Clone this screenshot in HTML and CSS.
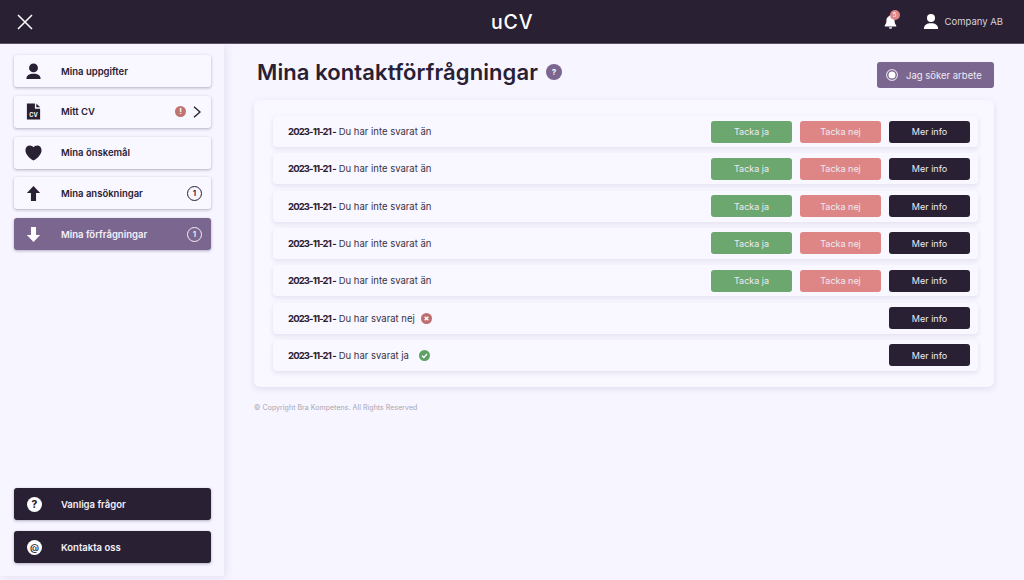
FILE: index.html
```html
<!DOCTYPE html>
<html lang="sv">

<head>
  <meta charset="UTF-8" />
  <title>Mina kontaktförfrågningar | uCV</title>
  <link rel="stylesheet" href="styles.css">
</head>

<body>

  <header class="topbar">
    <svg class="close-icon" viewBox="0 0 16 16" aria-hidden="true"><path d="M1 1l14 14M15 1L1 15" /></svg>
    <div class="logo">uCV</div>
    <div class="topbar-right">
      <div class="bell">
        <svg viewBox="0 0 16 18" aria-hidden="true"><path d="M8 1c.8 0 1.3.5 1.4 1.2C11.700 3 13 5 13 7.500c0 3 .6 4.600 2 6V15H1v-1.500c1.400-1.400 2-3 2-6C3 5 4.300 3 6.600 2.200 6.700 1.500 7.200 1 8 1zM6 16h4a2 2 0 0 1-4 0z" /></svg>
        <span class="bell-badge">5</span>
      </div>
      <div class="company">
        <svg viewBox="0 0 18 18" aria-hidden="true"><circle cx="9" cy="5" r="4.500" /><path d="M1 17.500c0-4.500 3-6.500 8-6.500s8 2 8 6.500z" /></svg>
        <span>Company AB</span>
      </div>
    </div>
  </header>

  <div class="page">
    <aside class="sidebar">
      <nav class="menu">
        <a class="menu-item">
          <svg class="menu-icon" viewBox="0 0 18 18"><circle cx="9" cy="5.200" r="4.700" /><path d="M1.500 17c0-3.800 2.800-5.500 7.500-5.500s7.500 1.700 7.500 5.500z" /></svg>
          <span class="menu-label">Mina uppgifter</span>
        </a>
        <a class="menu-item">
          <svg class="menu-icon" viewBox="0 0 18 18"><path d="M2 .5h8.500v5.500H16v11.500H2z" /><path d="M12 .5l4 4h-4z" /><text x="9" y="14.800" class="cv-text">CV</text></svg>
          <span class="menu-label">Mitt CV</span>
          <span class="alert-dot">!</span>
          <svg class="chevron" viewBox="0 0 8 12"><path d="M1 .8L7 6l-6 5.200" /></svg>
        </a>
        <a class="menu-item">
          <svg class="menu-icon heart" viewBox="0 0 18 18"><path d="M9 17.500C3.500 14 .5 10.500.5 6.500.5 3.200 2.500 1.500 5 1.500c1.800 0 3 .8 4 2 1-1.200 2.200-2 4-2 2.500 0 4.500 1.700 4.500 5 0 4-3 7.500-8.500 11z" /></svg>
          <span class="menu-label">Mina önskemål</span>
        </a>
        <a class="menu-item">
          <svg class="menu-icon" viewBox="0 0 18 18"><path d="M9 1l7 7.500h-4.300V17H6.300V8.500H2z" /></svg>
          <span class="menu-label">Mina ansökningar</span>
          <span class="count">1</span>
        </a>
        <a class="menu-item active">
          <svg class="menu-icon" viewBox="0 0 18 18"><path d="M9 17l-7-7.500h4.300V1h5.400v8.500H16z" /></svg>
          <span class="menu-label">Mina förfrågningar</span>
          <span class="count">1</span>
        </a>
      </nav>

      <nav class="menu menu-bottom">
        <a class="menu-item dark">
          <span class="round-icon">?</span>
          <span class="menu-label">Vanliga frågor</span>
        </a>
        <a class="menu-item dark">
          <span class="round-icon at">@</span>
          <span class="menu-label">Kontakta oss</span>
        </a>
      </nav>
    </aside>

    <main class="content">
      <div class="title-row">
        <h1>Mina kontaktförfrågningar</h1>
        <span class="help">?</span>
        <button class="job-toggle"><span class="radio"></span>Jag söker arbete</button>
      </div>

      <section class="card">
        <div class="row">
          <p><b>2023-11-21 -</b> Du har inte svarat än</p>
          <button class="btn yes">Tacka ja</button>
          <button class="btn no">Tacka nej</button>
          <button class="btn info">Mer info</button>
        </div>
        <div class="row">
          <p><b>2023-11-21 -</b> Du har inte svarat än</p>
          <button class="btn yes">Tacka ja</button>
          <button class="btn no">Tacka nej</button>
          <button class="btn info">Mer info</button>
        </div>
        <div class="row">
          <p><b>2023-11-21 -</b> Du har inte svarat än</p>
          <button class="btn yes">Tacka ja</button>
          <button class="btn no">Tacka nej</button>
          <button class="btn info">Mer info</button>
        </div>
        <div class="row">
          <p><b>2023-11-21 -</b> Du har inte svarat än</p>
          <button class="btn yes">Tacka ja</button>
          <button class="btn no">Tacka nej</button>
          <button class="btn info">Mer info</button>
        </div>
        <div class="row">
          <p><b>2023-11-21 -</b> Du har inte svarat än</p>
          <button class="btn yes">Tacka ja</button>
          <button class="btn no">Tacka nej</button>
          <button class="btn info">Mer info</button>
        </div>
        <div class="row">
          <p><b>2023-11-21 -</b> Du har svarat nej</p>
          <svg class="status" viewBox="0 0 12 12"><circle cx="6" cy="6" r="6" fill="#bd6f6f" /><path d="M4 4l4 4M8 4l-4 4" stroke="#fff" stroke-width="1.500" fill="none" /></svg>
          <button class="btn info">Mer info</button>
        </div>
        <div class="row">
          <p><b>2023-11-21 -</b> Du har svarat ja</p>
          <svg class="status status-ok" viewBox="0 0 12 12"><circle cx="6" cy="6" r="6" fill="#5da264" /><path d="M3.300 6.200l2 2 3.500-4" stroke="#fff" stroke-width="1.500" fill="none" /></svg>
          <button class="btn info">Mer info</button>
        </div>
      </section>

      <footer class="copyright">© Copyright Bra Kompetens. All Rights Reserved</footer>
    </main>
  </div>

</body>

</html>
```

FILE: styles.css
```css
* {
  margin: 0;
  padding: 0;
  box-sizing: border-box;
}

html,
body {
  height: 580px;
  overflow: hidden;
  font-family: Inter, 'Liberation Sans', sans-serif;
  background-color: #f7f5ff;
  color: #292033;
}

button {
  font-family: inherit;
  border: none;
}

/* topbar */
.topbar {
  height: 44px;
  padding: 0 21px 0 17px;
  display: flex;
  align-items: center;
  justify-content: space-between;
  position: relative;
  background-color: #292033;
  border-bottom: 1px solid #5d5468;
  color: #fff;
}

.close-icon {
  width: 16px;
  height: 16px;
  stroke: #fff;
  stroke-width: 1.500;
  fill: none;
}

.logo {
  position: absolute;
  left: 491px;
  top: 10px;
  font-size: 19.500px;
  line-height: 24px;
  font-weight: 500;
  letter-spacing: 0.8px;
}

.topbar-right {
  display: flex;
  align-items: center;
  gap: 25px;
}

.bell {
  width: 14px;
  height: 16px;
  position: relative;
}

.bell svg {
  display: block;
  width: 13px;
  height: 15px;
  fill: #fff;
}

.bell-badge {
  position: absolute;
  left: 6px;
  top: -4px;
  width: 10px;
  height: 10px;
  border-radius: 50%;
  background-color: #df8585;
  font-size: 6px;
  line-height: 10px;
  text-align: center;
}

.company {
  display: flex;
  align-items: center;
  gap: 6px;
  font-size: 9.500px;
  color: #d6d2dc;
}

.company svg {
  width: 16px;
  height: 17px;
  fill: #fff;
}

/* sidebar */
.page {
  display: flex;
  height: 536px;
}

.sidebar {
  width: 224px;
  height: 532px;
  padding: 11px 13px 13px 14px;
  display: flex;
  flex-direction: column;
  justify-content: space-between;
  box-shadow: 2px 2px 8px rgba(80, 60, 130, 0.1);
}

.menu {
  display: flex;
  flex-direction: column;
  gap: 8.800px;
}

.menu-bottom {
  gap: 11px;
}

.menu-item {
  height: 32px;
  padding: 0 9px 0 11px;
  display: flex;
  align-items: center;
  background-color: #f9f7ff;
  border-radius: 3px;
  box-shadow: 0 1px 3px rgba(50, 35, 80, 0.35);
  font-size: 9.500px;
  font-weight: 600;
  color: #292033;
}

.menu-item.active {
  background-color: #7b6690;
  color: #f4f0f8;
}

.menu-item.dark {
  background-color: #292033;
  color: #f4f0f8;
}

.menu-icon {
  width: 17px;
  height: 17px;
  flex: none;
  fill: #292033;
}

.active .menu-icon {
  fill: #fff;
}

.cv-text {
  font-size: 6px;
  font-weight: 700;
  fill: #fff;
  text-anchor: middle;
}

.menu-label {
  margin-left: 19px;
  flex: 1;
}

.alert-dot {
  width: 11px;
  height: 11px;
  border-radius: 50%;
  background-color: #c1736d;
  color: #fff;
  font-size: 8px;
  font-weight: 700;
  line-height: 11px;
  text-align: center;
}

.chevron {
  width: 8px;
  height: 12px;
  margin: 0 1px 0 7px;
  fill: none;
  stroke: #292033;
  stroke-width: 1.400;
}

.count {
  width: 15px;
  height: 15px;
  border: 1px solid currentColor;
  border-radius: 50%;
  font-size: 8px;
  line-height: 13px;
  text-align: center;
}

.round-icon {
  width: 15px;
  height: 15px;
  margin-left: 2px;
  flex: none;
  border-radius: 50%;
  background-color: #fff;
  color: #292033;
  font-size: 10px;
  font-weight: 800;
  line-height: 15px;
  text-align: center;
}

.round-icon.at {
  font-size: 9px;
  font-weight: 600;
}

.dark .menu-label {
  margin-left: 19px;
}

/* content */
.content {
  width: 740px;
  margin-left: 30px;
}

.title-row {
  height: 56px;
  display: flex;
  align-items: center;
}

h1 {
  margin-left: 3px;
  font-size: 22px;
  font-weight: 600;
  line-height: 30px;
  letter-spacing: 0.1px;
}

.help {
  width: 16px;
  height: 16px;
  margin-left: 8px;
  border-radius: 50%;
  background-color: #7b6690;
  color: #fff;
  font-size: 8px;
  font-weight: 700;
  line-height: 16px;
  text-align: center;
}

.job-toggle {
  width: 117px;
  height: 26px;
  margin-top: 6px;
  margin-left: auto;
  padding-left: 9px;
  display: flex;
  align-items: center;
  gap: 8px;
  background-color: #7b6690;
  border-radius: 3px;
  color: #efeaf3;
  font-size: 9.500px;
}

.radio {
  width: 12px;
  height: 12px;
  border: 1px solid #d8d0df;
  border-radius: 50%;
  background-color: #fff;
  box-shadow: inset 0 0 0 1.500px #7b6690;
}

.card {
  height: 287px;
  padding: 16px 16px 0 19px;
  display: flex;
  flex-direction: column;
  gap: 6.330px;
  background-color: #f9f7ff;
  border-radius: 6px;
  box-shadow: 0 2px 6px rgba(80, 60, 130, 0.13);
}

.row {
  height: 31px;
  padding: 0 8px 0 15px;
  display: flex;
  align-items: center;
  gap: 8px;
  background-color: #f9f7ff;
  border-radius: 4px;
  box-shadow: 0 2px 5px rgba(80, 60, 130, 0.12);
  font-size: 9.500px;
  color: #3a3244;
}

.row p {
  flex: none;
  margin-right: auto;
}

.row p b {
  font-weight: 700;
  letter-spacing: -0.85px;
  color: #292033;
}

.row p:has(+ .status) {
  margin-right: -2px;
}

.status {
  width: 11px;
  height: 11px;
  margin-right: auto;
}

.status-ok {
  margin-left: 4px;
}

.btn {
  width: 81px;
  height: 22px;
  border-radius: 3px;
  font-size: 9px;
  color: #efeaf3;
}

.btn.yes {
  background-color: #6ca76f;
}

.btn.no {
  background-color: #de8686;
}

.btn.info {
  background-color: #292033;
}

.copyright {
  margin-top: 16px;
  font-size: 7px;
  letter-spacing: 0.05px;
  color: #a9a5b0;
}
```
